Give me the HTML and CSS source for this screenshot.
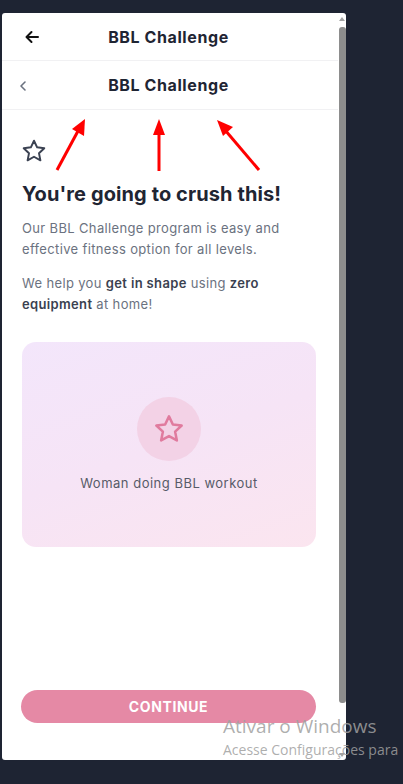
FILE: index.html
```html
<!DOCTYPE html>
<html lang="en">
<head>
<meta charset="utf-8">
<title>BBL Challenge</title>
<link rel="stylesheet" href="styles.css">
</head>
<body>
<div class="frame">
  <div class="page">
    <header class="bar bar-top">
      <svg class="back" width="16" height="16" viewBox="0 0 16 16" fill="none" stroke="#111" stroke-width="2" stroke-linecap="round" stroke-linejoin="round"><path d="M14 8H2.5M7.5 3L2.5 8l5 5"/></svg>
      <h1 class="bar-title">BBL Challenge</h1>
    </header>
    <header class="bar bar-sub">
      <svg class="chev" width="10" height="12" viewBox="0 0 10 12" fill="none" stroke="#6b7280" stroke-width="1.6" stroke-linecap="round" stroke-linejoin="round"><path d="M7 2L3 6l4 4"/></svg>
      <h2 class="bar-title">BBL Challenge</h2>
    </header>
    <main class="content">
      <svg class="star" width="26" height="26" viewBox="0 0 24 24" fill="none" stroke="#3b4252" stroke-width="1.8" stroke-linejoin="round"><path d="M12 2.5l2.9 6.1 6.6.8-4.9 4.6 1.3 6.6L12 17.3l-5.9 3.3 1.3-6.6-4.9-4.6 6.6-.8z"/></svg>
      <h3 class="headline">You're going to crush this!</h3>
      <p class="text">Our BBL Challenge program is easy and effective fitness option for all levels.</p>
      <p class="text">We help you <b>get in shape</b> using <b>zero equipment</b> at home!</p>
      <div class="card">
        <div class="circle">
          <svg width="32" height="32" viewBox="0 0 24 24" fill="none" stroke="#e07b9e" stroke-width="1.9" stroke-linejoin="round"><path d="M12 2.5l2.9 6.1 6.6.8-4.9 4.6 1.3 6.6L12 17.3l-5.9 3.3 1.3-6.6-4.9-4.6 6.6-.8z"/></svg>
        </div>
        <div class="caption">Woman doing BBL workout</div>
      </div>
      <button class="cta">CONTINUE</button>
    </main>
  </div>
  <div class="scrollbar">
    <span class="sb-up"></span>
    <span class="sb-thumb"></span>
    <span class="sb-down"></span>
  </div>
</div>

<svg class="arrows" width="403" height="200" viewBox="0 0 403 200">
  <g stroke="#f00" stroke-width="3" stroke-linecap="butt">
    <line x1="57" y1="170" x2="78" y2="131"/>
    <line x1="159" y1="171" x2="159" y2="132"/>
    <line x1="259" y1="170" x2="225" y2="130"/>
  </g>
  <g fill="#f00">
    <polygon points="85,119 84,136 72,129"/>
    <polygon points="159,119 165,135 153,135"/>
    <polygon points="217,120 233,127 223,136"/>
  </g>
</svg>

<div class="watermark">
  <div class="wm-title">Ativar o Windows</div>
  <div class="wm-sub">Acesse Configurações para</div>
</div>
</body>
</html>
```

FILE: styles.css
```css
* { box-sizing: border-box; }
html, body { margin: 0; padding: 0; }
body {
  background: #1e2433;
  height: 784px;
  overflow: hidden;
  font-family: Inter, "Open Sans", sans-serif;
  padding: 13px 0 0 2px;
}
.frame {
  width: 344px;
  height: 747px;
  background: #fff;
  border-radius: 3px;
  display: flex;
  overflow: hidden;
}
.page {
  flex: 1;
  display: flex;
  flex-direction: column;
  min-width: 0;
}
.bar {
  height: 48px;
  display: flex;
  align-items: center;
  justify-content: center;
  position: relative;
  border-bottom: 1px solid #f1f1f3;
  flex-shrink: 0;
}
.bar-sub { height: 49px; }
.bar-title {
  margin: 0 0 0 -3px;
  font-size: 16px;
  font-weight: 700;
  color: #1f2533;
  letter-spacing: 0.6px;
}
.back { position: absolute; left: 22px; top: 16px; }
.chev { position: absolute; left: 16px; top: 19px; }
.content {
  flex: 1;
  display: flex;
  flex-direction: column;
  padding: 28px 22px 37px 20px;
}
.star { display: block; margin-left: -1px; }
.headline {
  margin: 16px 0 0;
  font-size: 20px;
  line-height: 28px;
  font-weight: 700;
  color: #1f2533;
  letter-spacing: 0.1px;
}
.text {
  margin: 10px 0 0;
  font-size: 13px;
  line-height: 20.5px;
  color: #6b7280;
  letter-spacing: 0.35px;
}
.text + .text { margin-top: 14px; line-height: 21px; }
.text b { color: #3a4150; font-weight: 600; }
.card {
  margin-top: 27px;
  height: 205px;
  border-radius: 14px;
  background: linear-gradient(160deg, #f3e6fb 0%, #f6e4f6 50%, #fbe5ef 100%);
  display: flex;
  flex-direction: column;
  align-items: center;
  justify-content: center;
  gap: 13px;
}
.circle {
  width: 64px;
  height: 64px;
  border-radius: 50%;
  background: #f3d2e6;
  display: flex;
  align-items: center;
  justify-content: center;
}
.caption {
  font-size: 13px;
  line-height: 18px;
  color: #575b68;
  letter-spacing: 0.5px;
}
.cta {
  margin-top: auto;
  height: 33px;
  border: 0;
  border-radius: 17px;
  background: #e589a5;
  color: #fff;
  font-family: inherit;
  font-weight: 700;
  font-size: 14px;
  letter-spacing: 0.6px;
  margin-left: -1px;
}
.scrollbar {
  width: 8px;
  display: flex;
  flex-direction: column;
  align-items: center;
  padding: 4px 0 3px;
}
.sb-up, .sb-down {
  width: 0; height: 0;
  border-left: 3.5px solid transparent;
  border-right: 3.5px solid transparent;
}
.sb-up { border-bottom: 4px solid #a3a3a3; }
.sb-down { border-top: 4px solid #a3a3a3; }
.sb-thumb {
  margin: 6px 0 auto;
  width: 7px;
  height: 676px;
  border-radius: 3px;
  background: #8d8d8d;
}
.arrows { position: absolute; left: 0; top: 0; pointer-events: none; }
.watermark {
  position: absolute;
  left: 223px;
  top: 714px;
  font-family: "Open Sans", sans-serif;
  color: rgba(160, 160, 160, 0.85);
  white-space: nowrap;
}
.wm-title { font-size: 19px; line-height: 25px; }
.wm-sub { font-size: 14px; line-height: 19px; margin-top: 1px; }
```
